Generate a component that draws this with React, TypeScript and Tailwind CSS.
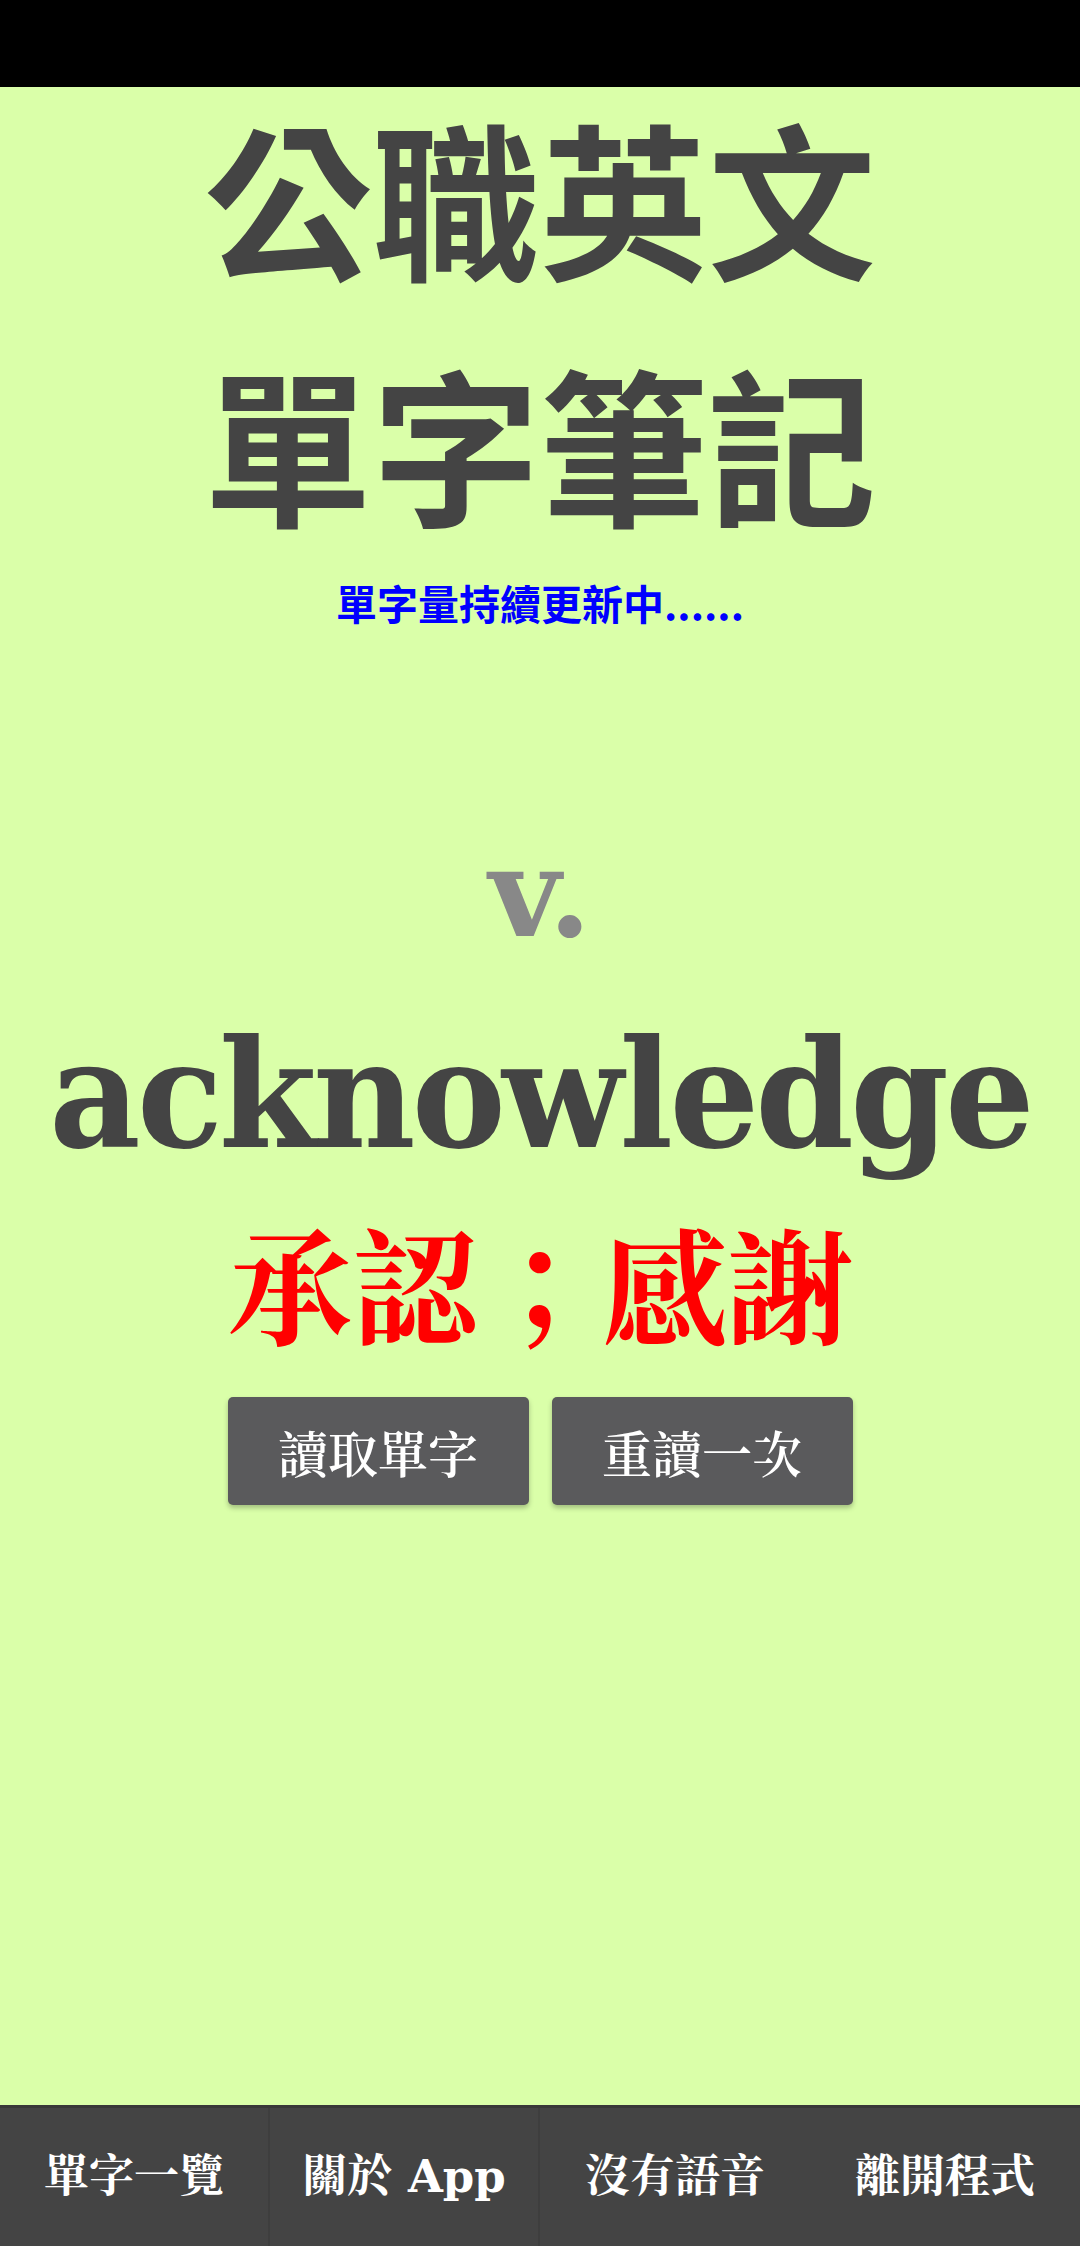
import React from "react";

const navItems = ["單字一覽", "關於 App", "沒有語音", "離開程式"];

export default function App() {
  return (
    <div className="h-screen flex flex-col bg-[#daffa9] overflow-hidden">
      {/* status bar */}
      <div className="h-[87px] shrink-0 bg-black" />

      <main className="flex-1 flex flex-col items-center">
        <h1 className="-mt-[15px] text-center font-['Noto_Sans_CJK_TC',sans-serif] font-bold text-[168px] leading-[246px] text-[#444]">
          公職英文
          <br />
          單字筆記
        </h1>
        <p className="mt-[8px] font-['Noto_Sans_CJK_TC',sans-serif] font-bold text-[41px] leading-[60px] text-[#0000ff]">
          單字量持續更新中......
        </p>

        <p className="mt-[191px] font-['DejaVu_Serif',serif] font-bold text-[124px] leading-[140px] text-[#888]">
          v.
        </p>
        <p className="mt-[31px] font-['DejaVu_Serif',serif] font-bold text-[150px] leading-[200px] text-[#444] tracking-[-4px] scale-x-[0.94]">
          acknowledge
        </p>
        <p className="mt-[7px] font-['Noto_Serif_CJK_TC','Noto_Sans_CJK_TC',serif] font-bold text-[125px] leading-[160px] text-[#ff0000]">
          承認；感謝
        </p>

        <div className="mt-[36px] flex gap-[23px]">
          <button className="w-[301px] h-[108px] rounded-[5px] bg-[#5a5a5c] shadow-[0_3px_5px_rgba(0,0,0,0.25)] font-['Noto_Serif_CJK_TC','Noto_Sans_CJK_TC',serif] font-semibold text-[50px] text-white">
            讀取單字
          </button>
          <button className="w-[301px] h-[108px] rounded-[5px] bg-[#5a5a5c] shadow-[0_3px_5px_rgba(0,0,0,0.25)] font-['Noto_Serif_CJK_TC','Noto_Sans_CJK_TC',serif] font-semibold text-[50px] text-white">
            重讀一次
          </button>
        </div>
      </main>

      {/* bottom menu */}
      <nav className="h-[141px] shrink-0 grid grid-cols-4 border-t-[3px] border-[#383838] bg-[#444]">
        {navItems.map((item, i) => (
          <div
            key={item}
            className={`flex items-center justify-center font-['DejaVu_Serif','Noto_Serif_CJK_TC','Noto_Sans_CJK_TC',serif] font-bold text-[45px] text-white ${
              i < 2 ? "border-r-2 border-[#3e3e3e]" : ""
            }`}
          >
            {item}
          </div>
        ))}
      </nav>
    </div>
  );
}
